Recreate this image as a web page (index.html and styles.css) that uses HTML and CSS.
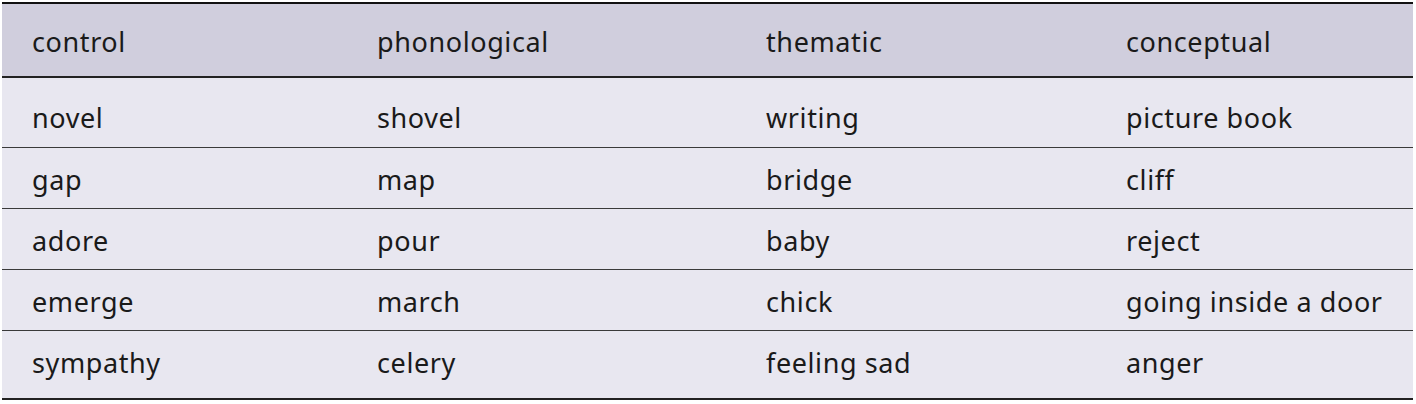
FILE: index.html
```html
<!DOCTYPE html>
<html>
<head>
<meta charset="utf-8">
<link rel="stylesheet" href="styles.css">
</head>
<body>
<div class="wrap">
<table class="words">
  <colgroup>
    <col class="c1"><col class="c2"><col class="c3"><col class="c4">
  </colgroup>
  <thead>
    <tr><th>control</th><th>phonological</th><th>thematic</th><th>conceptual</th></tr>
  </thead>
  <tbody>
    <tr class="first"><td>novel</td><td>shovel</td><td>writing</td><td>picture book</td></tr>
    <tr><td>gap</td><td>map</td><td>bridge</td><td>cliff</td></tr>
    <tr><td>adore</td><td>pour</td><td>baby</td><td>reject</td></tr>
    <tr><td>emerge</td><td>march</td><td>chick</td><td>going inside a door</td></tr>
    <tr class="last"><td>sympathy</td><td>celery</td><td>feeling sad</td><td>anger</td></tr>
  </tbody>
</table>
</div>
</body>
</html>
```

FILE: styles.css
```css
html, body {
  margin: 0;
  padding: 0;
  background: #ffffff;
}
.wrap {
  padding: 2px 3px 0 2px;
}
.words {
  width: 1411px;
  border-collapse: collapse;
  table-layout: fixed;
  font-family: "Noto Sans", "Open Sans", sans-serif;
  font-size: 27px;
  letter-spacing: 0.6px;
  color: #1a1a1a;
  border-top: 2px solid #111;
  border-bottom: 2px solid #222;
}
.c1 { width: 345px; }
.c2 { width: 389px; }
.c3 { width: 360px; }
.c4 { width: 317px; }
.words th {
  background: #d0cedd;
  font-weight: normal;
  text-align: left;
  padding: 2px 0 0 30px;
  height: 70px;
  border-bottom: 2px solid #222;
}
.words td {
  background: #e8e7f0;
  padding: 2px 0 0 30px;
  height: 58px;
  border-bottom: 1px solid #3a3a3a;
}
.words tr.first td {
  height: 59px;
  padding-top: 10px;
}
.words tr.last td {
  height: 59px;
  padding-bottom: 6px;
  border-bottom: none;
}
```
